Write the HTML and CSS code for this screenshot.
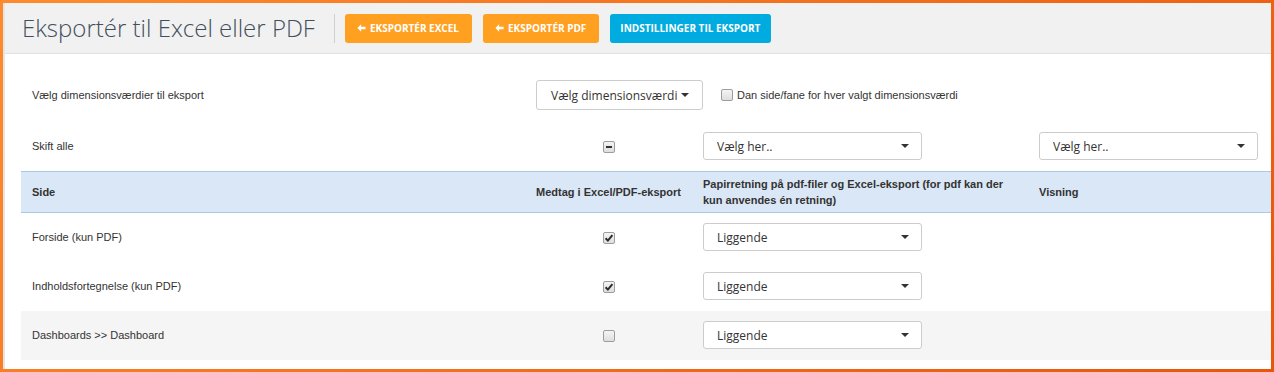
FILE: index.html
```html
<!DOCTYPE html>
<html lang="da">

<head>
    <meta charset="UTF-8">
    <meta name="viewport" content="width=device-width, initial-scale=1.0">
    <title>Eksportér til Excel eller PDF</title>
    <link rel="stylesheet" href="styles.css">
</head>

<body>
    <div class="frame">
        <div class="page">
            <!-- topbar med titel og knapper -->
            <div class="topbar">
                <h1 class="title">Eksportér til Excel eller PDF</h1>
                <span class="divider"></span>
                <button class="btn btn-orange">
                    <svg class="arrow" viewBox="0 0 10 9"><path d="M4.6 0.4 L0.4 4.5 L4.6 8.6 L4.6 6 L9.6 6 L9.6 3 L4.6 3 Z"/></svg>
                    Eksportér Excel
                </button>
                <button class="btn btn-orange">
                    <svg class="arrow" viewBox="0 0 10 9"><path d="M4.6 0.4 L0.4 4.5 L4.6 8.6 L4.6 6 L9.6 6 L9.6 3 L4.6 3 Z"/></svg>
                    Eksportér PDF
                </button>
                <button class="btn btn-blue">Indstillinger til eksport</button>
            </div>

            <div class="content">
                <table class="export-table">
                    <colgroup>
                        <col style="width: 504px">
                        <col style="width: 167px">
                        <col style="width: 336px">
                        <col>
                    </colgroup>
                    <tr class="row-dim">
                        <td>Vælg dimensionsværdier til eksport</td>
                        <td colspan="3">
                            <div class="dim-line">
                                <span class="dropdown">Vælg dimensionsværdi <span class="caret"></span></span>
                                <span class="cb"></span>
                                <span class="cb-label">Dan side/fane for hver valgt dimensionsværdi</span>
                            </div>
                        </td>
                    </tr>
                    <tr class="row-toggle">
                        <td>Skift alle</td>
                        <td class="center"><span class="cb cb-mixed"><span class="dash"></span></span></td>
                        <td><div class="select">Vælg her..<span class="caret"></span></div></td>
                        <td><div class="select">Vælg her..<span class="caret"></span></div></td>
                    </tr>
                    <tr class="head">
                        <th>Side</th>
                        <th class="center">Medtag i Excel/PDF-eksport</th>
                        <th>Papirretning på pdf-filer og Excel-eksport (for pdf kan der<br>kun anvendes én retning)</th>
                        <th>Visning</th>
                    </tr>
                    <tr class="row">
                        <td>Forside (kun PDF)</td>
                        <td class="center"><span class="cb"><svg class="check" viewBox="0 0 12 12"><path d="M2.6 6.3 L4.9 8.6 L9.4 3.2"/></svg></span></td>
                        <td><div class="select">Liggende<span class="caret"></span></div></td>
                        <td></td>
                    </tr>
                    <tr class="row">
                        <td>Indholdsfortegnelse (kun PDF)</td>
                        <td class="center"><span class="cb"><svg class="check" viewBox="0 0 12 12"><path d="M2.6 6.3 L4.9 8.6 L9.4 3.2"/></svg></span></td>
                        <td><div class="select">Liggende<span class="caret"></span></div></td>
                        <td></td>
                    </tr>
                    <tr class="row striped">
                        <td>Dashboards &gt;&gt; Dashboard</td>
                        <td class="center"><span class="cb"></span></td>
                        <td><div class="select">Liggende<span class="caret"></span></div></td>
                        <td></td>
                    </tr>
                </table>
            </div>
        </div>
    </div>
</body>

</html>
```

FILE: styles.css
```css
/* grundlæggende */
body {
    margin: 0;
    font-family: "Liberation Sans", Arial, sans-serif;
    font-size: 11px;
    color: #333;
}

.frame { /* orange ramme om hele vinduet */
    width: 1274px;
    height: 372px;
    box-sizing: border-box;
    border: 3px solid #f47321;
    border-image: linear-gradient(135deg, #ff8a2e, #e8560a) 1;
    overflow: hidden;
}

.page {
    height: 100%;
    border-left: 2px solid #e6e6e6;
    background: #fff;
}

/* topbar */
.topbar {
    height: 50px;
    background: #f1f1f1;
    border-bottom: 1px solid #e1e1e1;
    display: flex;
    align-items: center;
    padding-left: 17px;
}

.title {
    margin: 0;
    font-family: "Open Sans", sans-serif;
    font-weight: 300;
    font-size: 24px;
    color: #434e5c;
    line-height: 30px;
}

.divider {
    width: 1px;
    height: 29px;
    background: #cfcfcf;
    margin: 0 10px 0 19px;
}

.btn {
    height: 29px;
    border: none;
    border-radius: 3px;
    padding: 0 13px 0 12px;
    margin-right: 11px;
    color: #fff;
    font-family: "Open Sans", sans-serif;
    font-weight: 700;
    font-size: 10px;
    text-transform: uppercase;
    display: flex;
    align-items: center;
    gap: 4px;
    cursor: pointer;
}

.btn-orange {
    background: #ffa020;
}

.btn-blue {
    background: #00abe0;
    padding: 0 11px 0 10px;
}

.arrow {
    width: 9px;
    height: 8px;
    fill: #fff;
}

/* indhold */
.content {
    padding: 16px 0 0 16px;
}

.export-table {
    width: 100%;
    table-layout: fixed;
    border-collapse: collapse;
}

.export-table td {
    padding: 10px 11px 11px;
    vertical-align: middle;
    white-space: nowrap;
}

.row-dim td {
    padding-bottom: 12px;
}

.center {
    text-align: center;
}

.head th {
    background: #dae7f6;
    border-top: 1px solid #a7cbe6;
    border-bottom: 1px solid #a7cbe6;
    padding: 4px 11px;
    height: 32px;
    line-height: 16px;
    text-align: left;
    font-weight: 700;
    font-size: 11px;
    color: #333;
}

.head th.center {
    text-align: center;
}

.striped td {
    background: #f5f5f5;
}

/* dropdown og selects */
.dim-line {
    display: flex;
    align-items: center;
}

.dropdown {
    box-sizing: border-box;
    width: 167px;
    height: 30px;
    border: 1px solid #ccc;
    border-radius: 3px;
    display: flex;
    align-items: center;
    padding-left: 14px;
    gap: 4px;
    font-family: "Open Sans", sans-serif;
    font-size: 12px;
    color: #333;
    margin-right: 18px;
}

.select {
    box-sizing: border-box;
    width: 219px;
    height: 28px;
    border: 1px solid #ccc;
    border-radius: 3px;
    display: flex;
    align-items: center;
    justify-content: space-between;
    padding: 0 12px 0 13px;
    font-family: "Open Sans", sans-serif;
    font-size: 12px;
    color: #333;
    background: #fff;
}

.caret {
    display: inline-block;
    width: 0;
    height: 0;
    border-top: 4px solid #333;
    border-left: 4px solid transparent;
    border-right: 4px solid transparent;
}

/* checkbokse */
.cb {
    display: inline-block;
    box-sizing: border-box;
    width: 12px;
    height: 12px;
    border: 1px solid #9d9d9d;
    border-radius: 2px;
    background: linear-gradient(#f4f4f4, #dedede);
    vertical-align: middle;
    position: relative;
}

.check {
    position: absolute;
    left: -1px;
    top: -1px;
    width: 12px;
    height: 12px;
    fill: none;
    stroke: #2b2b2b;
    stroke-width: 2;
}

.cb-mixed .dash {
    position: absolute;
    left: 2px;
    top: 4px;
    width: 6px;
    height: 2px;
    background: #333;
}

.cb-label {
    margin-left: 4px;
}
```
